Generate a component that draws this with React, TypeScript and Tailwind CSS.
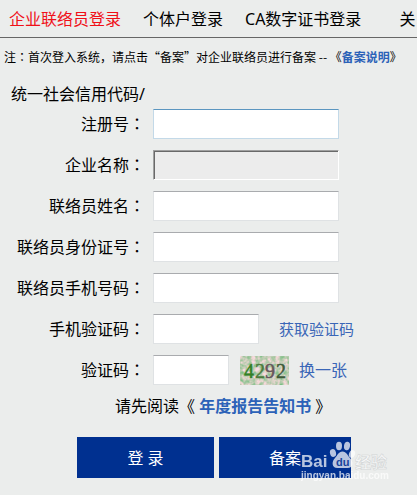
import React from "react";

const tabs = ["企业联络员登录", "个体户登录", "CA数字证书登录"];

const fields = [
  { id: "company", label: "企业名称", disabled: true },
  { id: "name", label: "联络员姓名", disabled: false },
  { id: "idcard", label: "联络员身份证号", disabled: false },
  { id: "mobile", label: "联络员手机号码", disabled: false },
];

const inputClass =
  "h-[30px] bg-white border border-[#dfe2e4] border-t-[#a9abae] px-1 outline-none";
const disabledClass =
  "h-[30px] bg-[#ececec] border border-t-[#a0a0a0] border-l-[#a0a0a0] border-r-white border-b-white shadow-[inset_1px_1px_0_#696969] px-1";
const labelClass = "w-[145px] h-[30px] shrink-0 text-right leading-[30px]";

const Colon = () => (
  <span className="leading-none font-['Noto_Sans_CJK_TC',sans-serif]">：</span>
);

const Captcha = () => (
  <svg width="49" height="29" viewBox="0 0 49 29" role="img" aria-label="4292">
    <defs>
      <filter id="noise" x="0" y="0" width="100%" height="100%" colorInterpolationFilters="sRGB">
        <feTurbulence type="fractalNoise" baseFrequency="0.25" numOctaves="3" seed="4" />
        <feColorMatrix values="1 0 0 0 0.28  0.2 0 0 0 0.71  0.7 0 0 0 0.37  0 0 0 0 1" />
      </filter>
    </defs>
    <rect width="49" height="29" fill="#c5d0bf" />
    <rect width="49" height="29" filter="url(#noise)" opacity="0.85" />
    <g fontFamily="'Liberation Serif', serif" fontSize="20" strokeWidth="0.5">
      <text x="4" y="22" fill="#338026" stroke="#338026">4</text>
      <text x="15" y="22" fill="#4c7a3c" stroke="#4c7a3c">2</text>
      <text x="25" y="22" fill="#67565b" stroke="#67565b">9</text>
      <text x="36" y="22" fill="#3e5a3a" stroke="#3e5a3a">2</text>
    </g>
  </svg>
);

const Watermark = () => (
  <svg
    className="absolute left-[301px] top-[14px] pointer-events-none"
    width="100"
    height="44"
    viewBox="0 0 100 44"
    aria-hidden="true"
  >
    <g fill="#ffffff" opacity="0.72" fontFamily="'Liberation Sans', sans-serif" fontWeight="bold">
      <text x="0" y="26" fontSize="17">Bai</text>
      <ellipse cx="32" cy="12" rx="3" ry="4" transform="rotate(-15 32 12)" />
      <ellipse cx="38" cy="5" rx="3" ry="4.2" />
      <ellipse cx="46" cy="5" rx="3" ry="4.2" transform="rotate(10 46 5)" />
      <ellipse cx="51" cy="13" rx="3" ry="4" transform="rotate(20 51 13)" />
      <path d="M41.500 10.500c4 0 5 4 7.500 6.500 3.500 3.500 3.500 10-2.500 10h-10c-6 0-6-6.500-2.500-10 2.500-2.500 3.500-6.500 7.500-6.500z" />
      <text x="0" y="38" fontSize="10">jingyan.baidu.com</text>
    </g>
    <text
      x="54"
      y="27"
      fontSize="16"
      fontWeight="bold"
      fill="#f6f7f7"
      stroke="#cfd2d3"
      strokeWidth="0.5"
      fontFamily="'Noto Sans CJK SC', sans-serif"
    >
      经验
    </text>
    <text x="35" y="25" fontSize="11" fontWeight="bold" fill="#17439b" fontFamily="'Liberation Sans', sans-serif">du</text>
  </svg>
);

const App = () => {
  return (
    <div className="min-h-screen overflow-hidden bg-[#ebedec] text-black text-base font-['Noto_Sans','Noto_Sans_CJK_SC',sans-serif]">
      {/* Tabs */}
      <nav className="flex gap-[22px] h-[38px] pl-[9px] items-center border-b border-[#666] whitespace-nowrap">
        {tabs.map((tab, index) => (
          <a key={tab} href="#" className={index === 0 ? "text-[#f01018]" : ""}>
            {tab}
          </a>
        ))}
        <a href="#" className="pl-4">关</a>
      </nav>

      {/* Notice */}
      <p className="h-[41px] pl-1 text-xs leading-[38px] whitespace-nowrap font-['Noto_Sans_CJK_SC',sans-serif]">
        注<Colon />首次登入系统，请点击“备案”对企业联络员进行备案 -- 《
        <a href="#" className="font-bold text-[#2c62b8]">备案说明</a>》
      </p>

      <form>
        <div className="flex flex-col gap-[11px]">
          <div className="flex items-end gap-2">
            <label htmlFor="code" className="w-[145px] h-[60px] shrink-0 text-right leading-[30px]">
              统一社会信用代码/
              <br />
              注册号<Colon />
            </label>
            <input
              id="code"
              className="h-[30px] w-[186px] bg-white border border-[#c3d9e8] border-t-[#5b96c0] px-1 outline-none"
            />
          </div>

          {fields.map((field) => (
            <div key={field.id} className="flex gap-2">
              <label htmlFor={field.id} className={labelClass}>
                {field.label}<Colon />
              </label>
              <input
                id={field.id}
                disabled={field.disabled}
                className={`w-[186px] ${field.disabled ? disabledClass : inputClass}`}
              />
            </div>
          ))}

          <div className="flex h-[30px] items-center gap-2">
            <label htmlFor="sms" className={labelClass}>
              手机验证码<Colon />
            </label>
            <input id="sms" className={`w-[106px] ${inputClass}`} />
            <a href="#" className="pl-3 text-[15px] leading-[30px] text-[#3a66b7]">获取验证码</a>
          </div>

          <div className="flex h-[30px] items-center gap-2">
            <label htmlFor="captcha" className={labelClass}>
              验证码<Colon />
            </label>
            <input id="captcha" className={`w-[76px] ${inputClass}`} />
            <div className="flex items-center gap-[10px] pl-[3px]">
              <Captcha />
              <a href="#" className="leading-[30px] text-[#3a66b7]">换一张</a>
            </div>
          </div>
        </div>

        <p className="h-[42px] pl-[115px] leading-[42px]">
          请先阅读《 <a href="#" className="font-bold text-[#2c62b8]">年度报告告知书</a> 》
        </p>

        <div className="relative flex gap-[5px] pl-[77px] pt-[10px]">
          <button type="submit" className="w-[137px] h-[41px] bg-[#003090] text-white">登 录</button>
          <button type="button" className="w-[132px] h-[41px] bg-[#003090] text-white">备案</button>
          <Watermark />
        </div>
      </form>
    </div>
  );
};

export default App;
